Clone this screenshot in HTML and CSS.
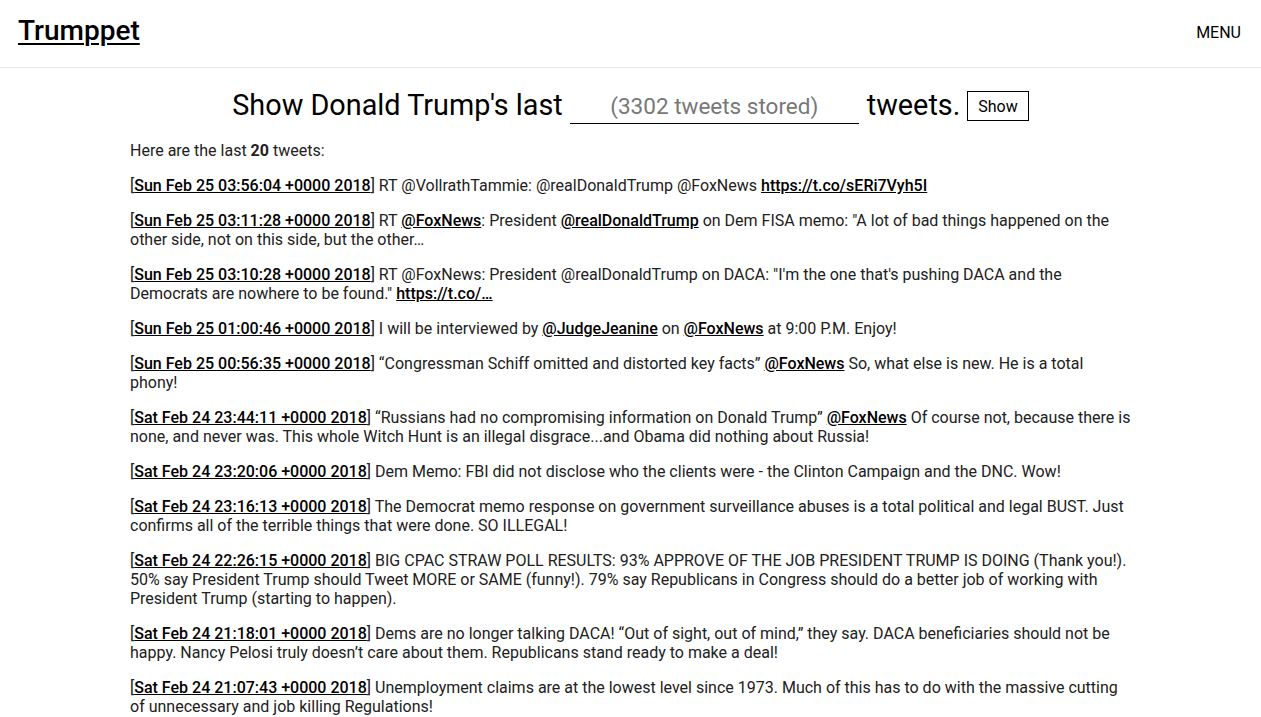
FILE: index.html
```html
<!DOCTYPE html>
<html>
<head>
<meta charset="utf-8">
<link rel="stylesheet" href="styles.css">
</head>
<body>
<header class="topbar">
  <a class="brand" href="#">Trumppet</a>
  <span class="menu">MENU</span>
</header>
<main class="content">
  <form class="query">
    <span>Show Donald Trump's last</span>
    <input class="count" type="text" placeholder="(3302 tweets stored)">
    <span>tweets.</span>
    <button class="show" type="button">Show</button>
  </form>
  <div class="tweets">
    <p>Here are the last <b>20</b> tweets:</p>
    <p>[<a href="#">Sun Feb 25 03:56:04 +0000 2018</a>] RT @VollrathTammie: @realDonaldTrump @FoxNews <a href="#">https://t.co/sERi7Vyh5I</a></p>
    <p>[<a href="#">Sun Feb 25 03:11:28 +0000 2018</a>] RT <a href="#">@FoxNews</a>: President <a href="#">@realDonaldTrump</a> on Dem FISA memo: "A lot of bad things happened on the other side, not on this side, but the other…</p>
    <p>[<a href="#">Sun Feb 25 03:10:28 +0000 2018</a>] RT @FoxNews: President @realDonaldTrump on DACA: "I'm the one that's pushing DACA and the Democrats are nowhere to be found." <a href="#">https://t.co/…</a></p>
    <p>[<a href="#">Sun Feb 25 01:00:46 +0000 2018</a>] I will be interviewed by <a href="#">@JudgeJeanine</a> on <a href="#">@FoxNews</a> at 9:00 P.M. Enjoy!</p>
    <p>[<a href="#">Sun Feb 25 00:56:35 +0000 2018</a>] “Congressman Schiff omitted and distorted key facts” <a href="#">@FoxNews</a> So, what else is new. He is a total phony!</p>
    <p>[<a href="#">Sat Feb 24 23:44:11 +0000 2018</a>] “Russians had no compromising information on Donald Trump” <a href="#">@FoxNews</a> Of course not, because there is none, and never was. This whole Witch Hunt is an illegal disgrace...and Obama did nothing about Russia!</p>
    <p>[<a href="#">Sat Feb 24 23:20:06 +0000 2018</a>] Dem Memo: FBI did not disclose who the clients were - the Clinton Campaign and the DNC. Wow!</p>
    <p>[<a href="#">Sat Feb 24 23:16:13 +0000 2018</a>] The Democrat memo response on government surveillance abuses is a total political and legal BUST. Just confirms all of the terrible things that were done. SO ILLEGAL!</p>
    <p>[<a href="#">Sat Feb 24 22:26:15 +0000 2018</a>] BIG CPAC STRAW POLL RESULTS: 93% APPROVE OF THE JOB PRESIDENT TRUMP IS DOING (Thank you!). 50% say President Trump should Tweet MORE or SAME (funny!). 79% say Republicans in Congress should do a better job of working with President Trump (starting to happen).</p>
    <p>[<a href="#">Sat Feb 24 21:18:01 +0000 2018</a>] Dems are no longer talking DACA! “Out of sight, out of mind,” they say. DACA beneficiaries should not be happy. Nancy Pelosi truly doesn’t care about them. Republicans stand ready to make a deal!</p>
    <p>[<a href="#">Sat Feb 24 21:07:43 +0000 2018</a>] Unemployment claims are at the lowest level since 1973. Much of this has to do with the massive cutting of unnecessary and job killing Regulations!</p>
  </div>
</main>
</body>
</html>
```
FILE: styles.css
```css
html, body {
  margin: 0;
  padding: 0;
  background: #fff;
}
body {
  font-family: Roboto, "Liberation Sans", sans-serif;
  color: #212121;
  font-size: 16px;
}
.topbar {
  height: 67px;
  border-bottom: 1px solid #e6e6e6;
  display: flex;
  align-items: center;
  justify-content: space-between;
  padding: 0 20px 0 18px;
}
.brand {
  font-size: 28px;
  font-weight: 500;
  color: #000;
  text-decoration: underline;
  text-decoration-thickness: 2px;
  text-underline-offset: 3px;
  margin-top: -6px;
}
.menu {
  font-size: 16px;
  color: #000;
  margin-top: -2px;
}
.content {
  width: 1001px;
  margin: 0 auto;
}
.query {
  display: flex;
  justify-content: center;
  align-items: center;
  gap: 7px;
  margin-top: 17px;
  font-size: 28.8px;
  color: #000;
}
.count {
  width: 289px;
  border: none;
  border-bottom: 1px solid #000;
  font-family: Roboto, sans-serif;
  font-size: 22.5px;
  text-align: center;
  padding: 2px 0 4px;
  margin: 6px 1px 0 0;
  outline: none;
}
.count::placeholder {
  color: #777;
}
.show {
  font-family: Roboto, sans-serif;
  font-size: 16px;
  background: #fff;
  border: 1px solid #000;
  padding: 3px 10px;
  height: 30px;
  color: #000;
  margin: 3px 0 0 0;
}
.tweets {
  margin-top: 17px;
  width: 1002px;
}
.tweets p {
  margin: 0 0 16px;
  line-height: 19px;
}
.tweets b {
  font-weight: 700;
}
.tweets a {
  color: #000;
  font-weight: 500;
  text-decoration: underline;
}
```
